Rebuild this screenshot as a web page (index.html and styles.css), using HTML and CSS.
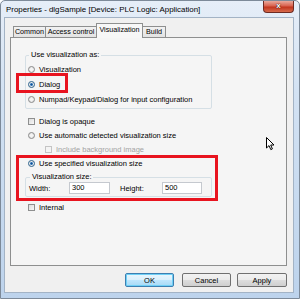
FILE: index.html
```html
<!DOCTYPE html>
<html lang="en">
<head>
  <meta charset="UTF-8">
  <title>Properties - dlgSample</title>
  <link rel="stylesheet" href="styles.css">
</head>
<body>

<div class="window">
  <div class="titlebar">
    <span class="title">Properties - dlgSample [Device: PLC Logic: Application]</span>
    <span class="close">x</span>
  </div>

  <div class="client">
    <div class="tabs">
      <span class="tab tab-common">Common</span>
      <span class="tab tab-access">Access control</span>
      <span class="tab tab-vis active">Visualization</span>
      <span class="tab tab-build">Build</span>
    </div>

    <div class="page">
      <fieldset class="group group-as">
        <legend>Use visualization as:</legend>
        <div class="row"><span class="radio"></span>Visualization</div>
        <div class="row"><span class="radio checked"></span>Dialog</div>
        <div class="row"><span class="radio"></span>Numpad/Keypad/Dialog for input configuration</div>
      </fieldset>

      <div class="item"><span class="check"></span>Dialog is opaque</div>
      <div class="item"><span class="radio"></span>Use automatic detected visualization size</div>
      <div class="item sub disabled"><span class="check"></span>Include background image</div>
      <div class="item"><span class="radio checked"></span>Use specified visualization size</div>

      <fieldset class="group group-size">
        <legend>Visualization size:</legend>
        <div class="size-row">
          <span class="lbl lbl-w">Width:</span>
          <span class="field">300</span>
          <span class="lbl lbl-h">Height:</span>
          <span class="field">500</span>
        </div>
      </fieldset>

      <div class="item internal"><span class="check"></span>Internal</div>

      <!-- red annotation boxes from the screenshot -->
      <div class="mark mark-dialog"></div>
      <div class="mark mark-size"></div>

      <svg class="cursor" width="9" height="14" viewBox="0 0 9 14">
        <path d="M0.5 0.5 L0.5 11 L3 8.6 L4.8 12.6 L6.4 11.9 L4.7 8 L8 8 Z" fill="#fff" stroke="#000" stroke-width="1" stroke-linejoin="round"/>
      </svg>
    </div>

    <div class="buttons">
      <button class="btn default">OK</button>
      <button class="btn">Cancel</button>
      <button class="btn apply">Apply</button>
    </div>
  </div>
</div>

</body>
</html>
```

FILE: styles.css
```css
body {
  margin: 0;
  background: #fff;
  font-family: 'Liberation Sans', Arial, sans-serif;
  font-size: 7.5px;
  color: #000;
}
.window {
  box-sizing: border-box;
  width: 300px;
  height: 299px;
  border: 1px solid #7d8a99;
  border-radius: 5px 5px 0 0;
  background: linear-gradient(to bottom, #e6eef8 0%, #d3e2f3 30%, #bdd3ec 100%);
  display: flex;
  flex-direction: column;
}
.titlebar {
  height: 16px;
  display: flex;
  align-items: flex-start;
  padding-left: 5px;
}
.title {
  margin-top: 4px;
  font-size: 7.9px;
  line-height: 9px;
}
.close {
  margin-left: auto;
  margin-right: 5px;
  width: 29px;
  height: 11px;
  border: 1px solid #6d2a22;
  border-top: none;
  border-radius: 0 0 4px 4px;
  background: linear-gradient(to bottom, #e9a99c 0%, #d9624e 45%, #c2351e 55%, #d66b4d 100%);
  color: #fff;
  font-weight: bold;
  font-size: 8px;
  line-height: 10px;
  text-align: center;
  text-shadow: 0 0 1px #3a0d08, 0 0 1px #3a0d08;
}
.client {
  flex: 1;
  margin: 0 5px 5px 3px;
  border: 1px solid #a3b3c5;
  background: #f0f0f0;
  padding: 5px;
  display: flex;
  flex-direction: column;
}
.tabs {
  display: flex;
  align-items: flex-end;
  height: 14px;
  margin-left: 3px;
  position: relative;
  z-index: 1;
}
.tab {
  height: 11px;
  box-sizing: border-box;
  border: 1px solid #8e8f8f;
  border-bottom: none;
  border-right: none;
  background: linear-gradient(to bottom, #f2f2f2, #e3e3e3);
  line-height: 10px;
  text-align: center;
  white-space: nowrap;
  font-size: 7.2px;
}
.tab-common { width: 32px; }
.tab-access { width: 51px; }
.tab-vis { width: 47px; }
.tab-build {
  width: 23px;
  border-right: 1px solid #8e8f8f;
}
.tab.active {
  height: 15px;
  margin-bottom: -1px;
  background: #f7f7f7;
  border-right: 1px solid #8e8f8f;
  line-height: 12px;
}
.tab.active + .tab {
  border-left: none;
}
.page {
  position: relative;
  box-sizing: border-box;
  height: 229px;
  margin-right: 1px;
  border: 1px solid #8e8f8f;
  background: #f5f5f5;
  padding-left: 14px;
}
.group {
  margin: 0;
  width: 187px;
  box-sizing: border-box;
  border: 1px solid #d5dfe5;
  border-radius: 2px;
  padding: 0 0 0 2px;
}
.group legend {
  padding: 0 2px;
  margin-left: 1px;
  line-height: 10px;
}
.group-as {
  margin-top: 12px;
  padding-top: 2px;
  padding-bottom: 1px;
}
.row {
  display: flex;
  align-items: center;
  height: 15px;
}
.item {
  display: flex;
  align-items: center;
  height: 14px;
  margin-left: 3px;
}
.group-as + .item {
  margin-top: 5px;
}
.item.sub {
  margin-left: 20px;
}
.disabled {
  color: #a3a3a3;
}
.radio {
  width: 7px;
  height: 7px;
  box-sizing: border-box;
  border-radius: 50%;
  border: 1px solid #8a8a8a;
  background: radial-gradient(circle, #f4f4f4 30%, #d8d8d8 100%);
  margin-right: 4px;
  flex-shrink: 0;
}
.radio.checked {
  background: radial-gradient(circle, #1b4f86 0%, #2f7cc6 35%, #e6e6e6 45%, #f4f4f4 100%);
  border-color: #2c628b;
}
.check {
  width: 7px;
  height: 7px;
  box-sizing: border-box;
  border: 1px solid #8e8f8f;
  background: linear-gradient(135deg, #dcdcdc, #f8f8f8);
  margin-right: 4px;
  flex-shrink: 0;
}
.disabled .check {
  border-color: #c4c4c4;
  background: #f4f4f4;
}
.group-size {
  margin-top: 2px;
  padding: 0 0 2px 3px;
}
.size-row {
  display: flex;
  align-items: center;
  height: 12px;
}
.lbl-w {
  width: 40px;
}
.lbl-h {
  width: 42px;
  margin-left: 10px;
}
.field {
  box-sizing: border-box;
  width: 41px;
  height: 12px;
  border: 1px solid #c5c9cf;
  background: #fff;
  padding-left: 2px;
  line-height: 10px;
}
.field:last-child {
  width: 40px;
}
.internal {
  margin-top: 3px;
}
.mark {
  position: absolute;
  box-sizing: border-box;
  border: 3px solid #e8141f;
}
.mark-dialog {
  left: 5px;
  top: 35px;
  width: 52px;
  height: 20px;
}
.mark-size {
  left: 5px;
  top: 117px;
  width: 202px;
  height: 46px;
}
.cursor {
  position: absolute;
  left: 255px;
  top: 99px;
}
.buttons {
  display: flex;
  justify-content: flex-end;
  margin-top: 7px;
  margin-right: 1px;
}
.btn {
  box-sizing: border-box;
  width: 49px;
  height: 14px;
  margin-left: 8px;
  padding: 0;
  border: 1px solid #707070;
  border-radius: 2px;
  background: linear-gradient(to bottom, #f2f2f2 0%, #ebebeb 50%, #dddddd 51%, #cfcfcf 100%);
  font-family: 'Liberation Sans', Arial, sans-serif;
  font-size: 7.5px;
  color: #000;
}
.btn.default {
  border-color: #3c7fb1;
  box-shadow: inset 0 0 0 1px #6fd0f6;
  background: linear-gradient(to bottom, #eaf6fd 0%, #d9f0fc 50%, #bee6fd 51%, #a7d9f5 100%);
}
.btn.apply {
  width: 50px;
  margin-left: 6px;
}
```
